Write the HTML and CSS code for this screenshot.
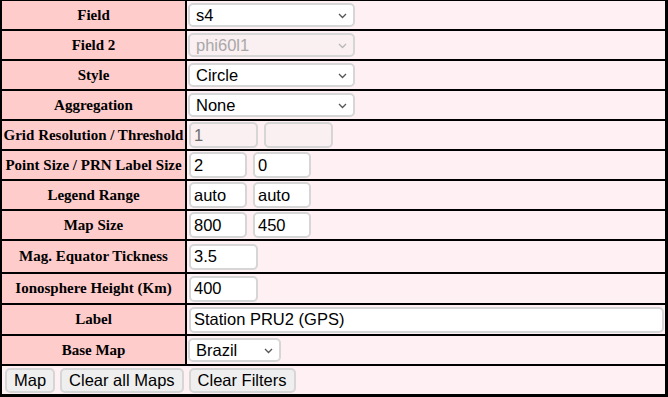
FILE: index.html
```html
<!DOCTYPE html>
<html lang="en">
<head>
    <meta charset="UTF-8">
    <meta name="viewport" content="width=device-width, initial-scale=1.0">
    <title>Map Options</title>
    <link rel="stylesheet" href="styles.css">
</head>
<body>

    <!-- Map options form -->
    <table class="options">
        <tr>
            <td class="label">Field</td>
            <td class="value">
                <div class="controls">
                    <span class="select-wrap">
                        <select class="sel-wide"><option>s4</option></select>
                        <svg class="chevron" width="9" height="6" viewBox="0 0 9 6"><polyline points="1,1 4.5,4.5 8,1" /></svg>
                    </span>
                </div>
            </td>
        </tr>
        <tr>
            <td class="label">Field 2</td>
            <td class="value">
                <div class="controls">
                    <span class="select-wrap">
                        <select class="sel-wide" disabled><option>phi60l1</option></select>
                        <svg class="chevron off" width="9" height="6" viewBox="0 0 9 6"><polyline points="1,1 4.5,4.5 8,1" /></svg>
                    </span>
                </div>
            </td>
        </tr>
        <tr>
            <td class="label">Style</td>
            <td class="value">
                <div class="controls">
                    <span class="select-wrap">
                        <select class="sel-wide"><option>Circle</option></select>
                        <svg class="chevron" width="9" height="6" viewBox="0 0 9 6"><polyline points="1,1 4.5,4.5 8,1" /></svg>
                    </span>
                </div>
            </td>
        </tr>
        <tr>
            <td class="label">Aggregation</td>
            <td class="value">
                <div class="controls">
                    <span class="select-wrap">
                        <select class="sel-wide"><option>None</option></select>
                        <svg class="chevron" width="9" height="6" viewBox="0 0 9 6"><polyline points="1,1 4.5,4.5 8,1" /></svg>
                    </span>
                </div>
            </td>
        </tr>
        <tr>
            <td class="label">Grid Resolution / Threshold</td>
            <td class="value">
                <div class="controls">
                    <input type="text" class="in-mid" value="1" disabled>
                    <input type="text" class="in-mid" value="" disabled>
                </div>
            </td>
        </tr>
        <tr>
            <td class="label">Point Size / PRN Label Size</td>
            <td class="value">
                <div class="controls">
                    <input type="text" class="in-small" value="2">
                    <input type="text" class="in-small" value="0">
                </div>
            </td>
        </tr>
        <tr>
            <td class="label">Legend Range</td>
            <td class="value">
                <div class="controls">
                    <input type="text" class="in-small" value="auto">
                    <input type="text" class="in-small" value="auto">
                </div>
            </td>
        </tr>
        <tr>
            <td class="label">Map Size</td>
            <td class="value">
                <div class="controls">
                    <input type="text" class="in-small" value="800">
                    <input type="text" class="in-small" value="450">
                </div>
            </td>
        </tr>
        <tr class="row-31">
            <td class="label">Mag. Equator Tickness</td>
            <td class="value">
                <div class="controls">
                    <input type="text" class="in-mid" value="3.5">
                </div>
            </td>
        </tr>
        <tr class="row-29">
            <td class="label">Ionosphere Height (Km)</td>
            <td class="value">
                <div class="controls">
                    <input type="text" class="in-mid" value="400">
                </div>
            </td>
        </tr>
        <tr class="row-29">
            <td class="label">Label</td>
            <td class="value">
                <div class="controls">
                    <input type="text" class="in-full" value="Station PRU2 (GPS)">
                </div>
            </td>
        </tr>
        <tr>
            <td class="label">Base Map</td>
            <td class="value">
                <div class="controls">
                    <span class="select-wrap">
                        <select class="sel-small"><option>Brazil</option></select>
                        <svg class="chevron" width="9" height="6" viewBox="0 0 9 6"><polyline points="1,1 4.5,4.5 8,1" /></svg>
                    </span>
                </div>
            </td>
        </tr>
        <tr class="last">
            <td class="value buttons" colspan="2">
                <div class="controls">
                    <button class="btn">Map</button>
                    <button class="btn">Clear all Maps</button>
                    <button class="btn">Clear Filters</button>
                </div>
            </td>
        </tr>
    </table>

</body>
</html>
```

FILE: styles.css
```css
body {
    margin: 0;
    font-family: "Liberation Sans", Arial, sans-serif;
    background-color: #ffffff;
}
.options {
    width: 668px;
    border-collapse: separate;
    border-spacing: 0;
    border-top: 1px solid #000;
    border-left: 2px solid #000;
    border-right: 3px solid #000;
    border-bottom: 3px solid #000;
    table-layout: fixed;
}
.options td {
    padding: 0;
    height: 28px;
    border-bottom: 2px solid #000;
    vertical-align: middle;
}
.options tr.row-31 td {
    height: 31px;
}
.options tr.row-29 td {
    height: 29px;
}
.options tr.last td {
    border-bottom: none;
}
.label {
    width: 183px;
    background-color: #ffcccc;
    border-right: 2px solid #000;
    text-align: center;
    font-family: "Liberation Serif", "Times New Roman", serif;
    font-weight: bold;
    font-size: 15px;
    color: #000;
    white-space: nowrap;
}
.value {
    background-color: #fff0f3;
    padding-left: 1px !important;
}
.controls {
    display: flex;
    align-items: center;
    gap: 5px;
}
input[type="text"] {
    box-sizing: border-box;
    height: 26px;
    margin: 0 0 0 1px;
    padding: 1px 3px;
    font-family: "Liberation Sans", Arial, sans-serif;
    font-size: 16.5px;
    color: #000;
    background-color: #fff;
    border: 2px solid #d6d6d6;
    border-radius: 5px;
    outline: none;
}
input[type="text"]:disabled {
    background-color: rgba(239, 239, 239, 0.3);
    color: #6d6d6d;
}
.in-small {
    width: 58px;
}
.in-mid {
    width: 69px;
}
.in-full {
    width: 475px;
}
.select-wrap {
    position: relative;
    display: inline-block;
}
select {
    -webkit-appearance: none;
    appearance: none;
    box-sizing: border-box;
    height: 24px;
    margin: 0;
    padding: 0 20px 0 6px;
    font-family: "Liberation Sans", Arial, sans-serif;
    font-size: 16.5px;
    color: #000;
    background-color: #fff;
    border: 2px solid #d6d6d6;
    border-radius: 5px;
}
select:disabled {
    background-color: rgba(239, 239, 239, 0.3);
    color: #a8a8a8;
    opacity: 1;
}
.sel-wide {
    width: 167px;
}
.sel-small {
    width: 93px;
}
.chevron {
    position: absolute;
    right: 8px;
    top: 10px;
    pointer-events: none;
}
.chevron polyline {
    fill: none;
    stroke: #555;
    stroke-width: 1.3;
}
.chevron.off polyline {
    stroke: #b8b8b8;
}
.buttons {
    padding-left: 3px !important;
}
.btn {
    box-sizing: border-box;
    height: 25px;
    margin: 0;
    padding: 0 7px;
    font-family: "Liberation Sans", Arial, sans-serif;
    font-size: 16.5px;
    color: #000;
    background-color: #efefef;
    border: 2px solid #d6d6d6;
    border-radius: 5px;
}
```
